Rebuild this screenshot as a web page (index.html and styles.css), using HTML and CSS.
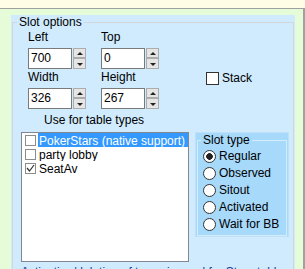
FILE: index.html
```html
<!DOCTYPE html>
<html lang="en">
<head>
    <meta charset="UTF-8">
    <title>Slot options</title>
    <link rel="stylesheet" href="styles.css">
</head>
<body>
    <div class="topbar"></div>
    <div class="frame">
        <div class="panel">
            <fieldset class="slot-options">
                <legend>Slot options</legend>
                <!-- Position and size -->
                <div class="coords">
                    <div class="field">
                        <div class="label">Left</div>
                        <div class="spin">
                            <div class="spin-input">700</div>
                            <div class="spin-btns"><span class="btn up"></span><span class="btn down"></span></div>
                        </div>
                    </div>
                    <div class="field">
                        <div class="label">Top</div>
                        <div class="spin">
                            <div class="spin-input">0</div>
                            <div class="spin-btns"><span class="btn up"></span><span class="btn down"></span></div>
                        </div>
                    </div>
                    <div class="field">
                        <div class="label">Width</div>
                        <div class="spin">
                            <div class="spin-input">326</div>
                            <div class="spin-btns"><span class="btn up"></span><span class="btn down"></span></div>
                        </div>
                    </div>
                    <div class="field">
                        <div class="label">Height</div>
                        <div class="spin">
                            <div class="spin-input">267</div>
                            <div class="spin-btns"><span class="btn up"></span><span class="btn down"></span></div>
                        </div>
                    </div>
                    <label class="stack"><span class="check big"></span>Stack</label>
                </div>
                <!-- Table types and slot type -->
                <div class="tables">
                    <div class="tables-label">Use for table types</div>
                    <div class="listbox">
                        <div class="item"><span class="check"></span><span class="item-text selected">PokerStars (native support)</span></div>
                        <div class="item"><span class="check"></span><span class="item-text">party lobby</span></div>
                        <div class="item">
                            <span class="check"><svg width="9" height="9" viewBox="0 0 9 9"><polyline points="1,4 3.5,7 8,1" fill="none" stroke="#333" stroke-width="1.2"/></svg></span>
                            <span class="item-text">SeatAv</span>
                        </div>
                    </div>
                    <div class="slot-box">
                        <fieldset class="slot-type">
                            <legend>Slot type</legend>
                            <label class="radio-row"><span class="radio checked"></span>Regular</label>
                            <label class="radio-row"><span class="radio"></span>Observed</label>
                            <label class="radio-row"><span class="radio"></span>Sitout</label>
                            <label class="radio-row"><span class="radio"></span>Activated</label>
                            <label class="radio-row"><span class="radio"></span>Wait for BB</label>
                        </fieldset>
                    </div>
                </div>
                <div class="note">Activating/deleting of types is used for Stars table selection</div>
            </fieldset>
        </div>
    </div>
</body>
</html>
```

FILE: styles.css
```css
/* Slot options dialog */
body {
    margin: 0;
    width: 305px;
    height: 269px;
    overflow: hidden;
    font-family: "Liberation Sans", Arial, sans-serif;
    font-size: 12px;
    line-height: 15px;
    color: #000;
    background-color: #e6fcd8;
}
.topbar {
    height: 8px;
    background-color: #fffde6;
    border-bottom: 1px solid #a0a0a0;
}
.frame {
    width: 292px;
    height: 260px;
    padding: 6px 0 0 11px;
    background-color: #e6fcd8;
    border-right: 2px solid #a0a0a0;
}
.panel {
    width: 284px;
    height: 300px;
    background-color: #d0ebfd;
    overflow: hidden;
}
fieldset {
    margin: 0;
    min-width: 0;
}
.slot-options {
    margin: 0 1px;
    padding: 0;
    height: 290px;
    border: 1px solid #d2d6d8;
}
.slot-options legend {
    margin-left: 4px;
    padding: 0 2px;
}
.coords {
    display: grid;
    grid-template-columns: 73px 73px auto;
    row-gap: 1px;
    padding-left: 15px;
}
.field:nth-child(odd) {
    grid-column: 1;
}
.field:nth-child(even) {
    grid-column: 2;
}
.spin {
    display: flex;
    margin-top: 3px;
}
.spin-input {
    width: 44px;
    height: 21px;
    box-sizing: border-box;
    padding-left: 2px;
    border: 1px solid #7a7a7a;
    background-color: #fff;
    line-height: 19px;
}
.spin-btns {
    display: flex;
    flex-direction: column;
    margin-left: 1px;
}
.btn {
    width: 13px;
    height: 10px;
    box-sizing: border-box;
    border: 1px solid #acacac;
    background-color: #e5e5e5;
    position: relative;
}
.btn.down {
    height: 11px;
}
.btn::after {
    content: "";
    position: absolute;
    left: 3px;
    top: 3px;
    border-left: 3px solid transparent;
    border-right: 3px solid transparent;
}
.btn.up::after {
    border-bottom: 3px solid #222;
}
.btn.down::after {
    top: 4px;
    border-top: 3px solid #222;
}
.stack {
    grid-column: 3;
    grid-row: 2;
    display: flex;
    align-items: center;
    gap: 3px;
    margin: 1px 0 0 32px;
    align-self: start;
}
.check {
    width: 11px;
    height: 11px;
    box-sizing: border-box;
    border: 1px solid #8c8c8c;
    background-color: #fff;
    display: flex;
    align-items: center;
    justify-content: center;
    flex-shrink: 0;
}
.check.big {
    width: 13px;
    height: 13px;
    border-color: #333;
}
.tables {
    display: grid;
    grid-template-columns: 168px 94px;
    column-gap: 6px;
    row-gap: 4px;
    margin-top: 4px;
    padding-left: 8px;
}
.tables-label {
    grid-column: 1 / 3;
    padding-left: 23px;
}
.listbox {
    height: 130px;
    box-sizing: border-box;
    border: 1px solid #828790;
    background-color: #fff;
}
.item {
    display: flex;
    align-items: center;
    height: 14px;
    padding-left: 3px;
}
.item-text {
    flex: 1;
    min-width: 0;
    margin-left: 2px;
    padding: 0 1px;
    height: 14px;
    line-height: 16px;
    white-space: nowrap;
    overflow: hidden;
}
.item-text.selected {
    background-color: #3399ff;
    color: #fff;
}
.slot-box {
    height: 105px;
    box-sizing: border-box;
    padding: 0 1px;
    border: 1px solid #bfe0f6;
    background-color: #a7d9fb;
}
.slot-type {
    padding: 0 5px 2px;
    border: 1px solid #d2ecfc;
}
.slot-type legend {
    margin-left: -2px;
    padding: 0 2px;
}
.radio-row {
    display: flex;
    align-items: center;
    gap: 3px;
    height: 17px;
}
.radio {
    width: 13px;
    height: 13px;
    box-sizing: border-box;
    border: 1px solid #333;
    border-radius: 50%;
    background-color: #fff;
}
.radio.checked {
    background: radial-gradient(circle, #222 0, #222 3px, #fff 3.6px);
}
.note {
    margin-top: 3px;
    padding-left: 8px;
    color: #1c3a9a;
    white-space: nowrap;
}
```
